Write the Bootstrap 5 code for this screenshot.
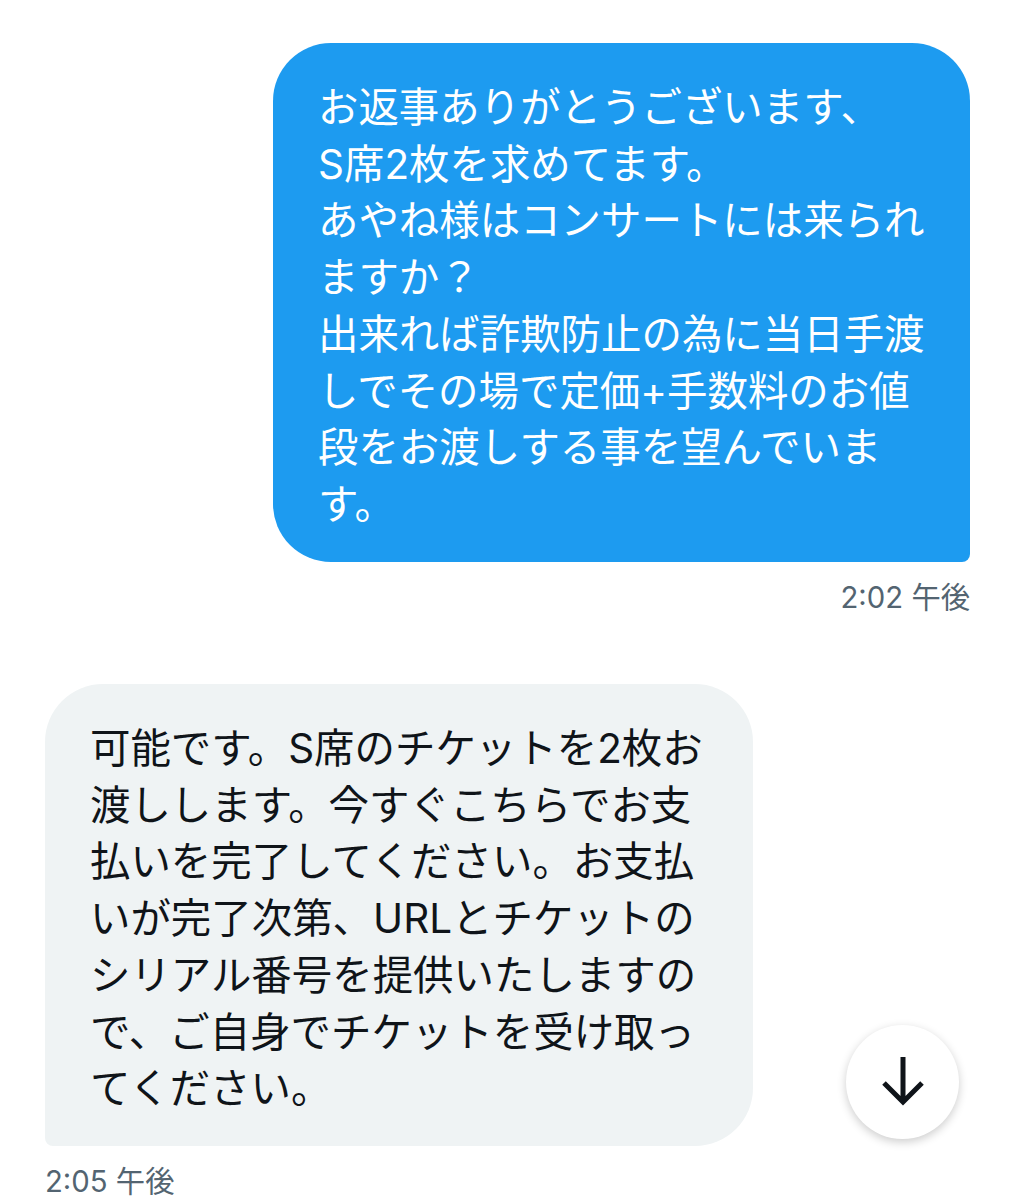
<!DOCTYPE html>
<html lang="ja">
<head>
    <meta charset="UTF-8">
    <meta name="viewport" content="width=device-width, initial-scale=1.0">
    <title>DM</title>
    <link href="https://cdn.jsdelivr.net/npm/bootstrap@5.3.0/dist/css/bootstrap.min.css" rel="stylesheet">
    <style>
        html, body { height: 1200px; overflow: hidden; background: #fff; }
        body { font-family: "Inter", "Noto Sans CJK JP", sans-serif; position: relative; }
        .chat-wrap { padding: 43px 45px 0 45px; }
        .bubble { font-size: 40.45px; line-height: 56.7px; white-space: nowrap; }
        .bubble-me { width: 697px; height: 519px; background: #1d9bf0; color: #fff; border-radius: 58px 58px 8px 58px; padding: 37px 0 0 45px; }
        .bubble-you { width: 708px; height: 462px; background: #eff3f4; color: #0f1419; border-radius: 58px 58px 58px 8px; padding: 37px 0 0 45px; }
        .stamp { font-size: 29.3px; line-height: 36px; color: #536471; }
        .stamp-me { margin-top: 18px; margin-bottom: 68px; }
        .stamp-you { margin-top: 18px; }
        .scroll-btn { position: absolute; left: 846px; top: 1025px; width: 113px; height: 114px; background: #fff; box-shadow: 0 3px 10px rgba(0,0,0,.2); }
    </style>
</head>
<body>
    <div class="chat-wrap d-flex flex-column">
        <div class="align-self-end text-end">
            <div class="bubble bubble-me text-start">お返事ありがとうございます、<br>S席2枚を求めてます。<br>あやね様はコンサートには来られ<br>ますか？<br>出来れば詐欺防止の為に当日手渡<br>しでその場で定価+手数料のお値<br>段をお渡しする事を望んでいま<br>す。</div>
            <div class="stamp stamp-me">2:02 午後</div>
        </div>
        <div class="align-self-start">
            <div class="bubble bubble-you">可能です。S席のチケットを2枚お<br>渡しします。今すぐこちらでお支<br>払いを完了してください。お支払<br>いが完了次第、URLとチケットの<br>シリアル番号を提供いたしますの<br>で、ご自身でチケットを受け取っ<br>てください。</div>
            <div class="stamp stamp-you">2:05 午後</div>
        </div>
    </div>
    <div class="scroll-btn rounded-circle d-flex align-items-center justify-content-center">
        <svg width="56" height="56" viewBox="0 0 56 56" fill="none" stroke="#0f1419" stroke-width="5"><path d="M28 3v46M9 29l19 19 19-19"/></svg>
    </div>
    <script src="https://cdn.jsdelivr.net/npm/bootstrap@5.3.0/dist/js/bootstrap.bundle.min.js"></script>
</body>
</html>
